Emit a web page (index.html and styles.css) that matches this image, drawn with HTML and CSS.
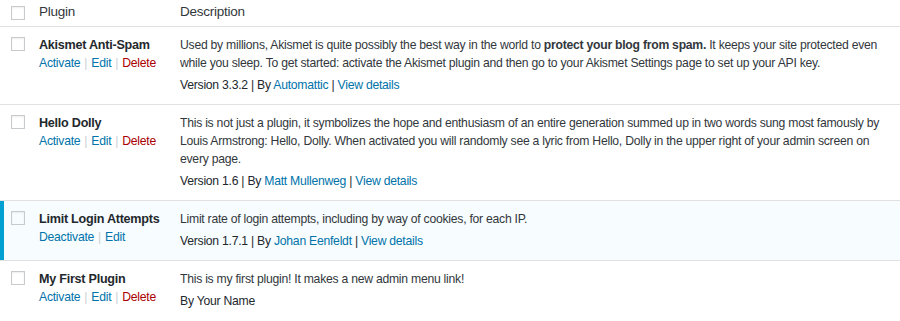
FILE: index.html
```html
<!DOCTYPE html>
<html lang="en">
<head>
    <meta charset="UTF-8">
    <title>Plugins</title>
    <link rel="stylesheet" href="styles.css">
</head>
<body>
    <table class="plugins">
        <thead>
            <tr>
                <td class="check"><span class="box"></span></td>
                <th class="col-name">Plugin</th>
                <th class="col-desc">Description</th>
            </tr>
        </thead>
        <tbody>
            <tr>
                <td class="check"><span class="box"></span></td>
                <td class="col-name">
                    <strong>Akismet Anti-Spam</strong>
                    <div class="actions"><a href="#">Activate</a><span class="sep">|</span><a href="#">Edit</a><span class="sep">|</span><a class="delete" href="#">Delete</a></div>
                </td>
                <td class="col-desc">
                    <p>Used by millions, Akismet is quite possibly the best way in the world to <strong>protect your blog from spam.</strong> It keeps your site protected even while you sleep. To get started: activate the Akismet plugin and then go to your Akismet Settings page to set up your API key.</p>
                    <div class="meta">Version 3.3.2 | By <a href="#">Automattic</a> | <a href="#">View details</a></div>
                </td>
            </tr>
            <tr>
                <td class="check"><span class="box"></span></td>
                <td class="col-name">
                    <strong>Hello Dolly</strong>
                    <div class="actions"><a href="#">Activate</a><span class="sep">|</span><a href="#">Edit</a><span class="sep">|</span><a class="delete" href="#">Delete</a></div>
                </td>
                <td class="col-desc">
                    <p>This is not just a plugin, it symbolizes the hope and enthusiasm of an entire generation summed up in two words sung most famously by Louis Armstrong: Hello, Dolly. When activated you will randomly see a lyric from Hello, Dolly in the upper right of your admin screen on every page.</p>
                    <div class="meta">Version 1.6 | By <a href="#">Matt Mullenweg</a> | <a href="#">View details</a></div>
                </td>
            </tr>
            <tr class="active">
                <td class="check"><span class="box"></span></td>
                <td class="col-name">
                    <strong>Limit Login Attempts</strong>
                    <div class="actions"><a href="#">Deactivate</a><span class="sep">|</span><a href="#">Edit</a></div>
                </td>
                <td class="col-desc">
                    <p>Limit rate of login attempts, including by way of cookies, for each IP.</p>
                    <div class="meta">Version 1.7.1 | By <a href="#">Johan Eenfeldt</a> | <a href="#">View details</a></div>
                </td>
            </tr>
            <tr>
                <td class="check"><span class="box"></span></td>
                <td class="col-name">
                    <strong>My First Plugin</strong>
                    <div class="actions"><a href="#">Activate</a><span class="sep">|</span><a href="#">Edit</a><span class="sep">|</span><a class="delete" href="#">Delete</a></div>
                </td>
                <td class="col-desc">
                    <p>This is my first plugin! It makes a new admin menu link!</p>
                    <div class="meta">By Your Name</div>
                </td>
            </tr>
        </tbody>
    </table>
</body>
</html>
```
FILE: styles.css
```css
body {
    margin: 0;
    background: #fff;
    font-family: "Liberation Sans", Arial, sans-serif;
    font-size: 12.2px;
    letter-spacing: -0.25px;
    line-height: 18px;
    color: #32373c;
}
.plugins {
    width: 100%;
    border-collapse: collapse;
}
.plugins td,
.plugins th {
    vertical-align: top;
    text-align: left;
}
.plugins thead th,
.plugins thead td {
    font-weight: normal;
    font-size: 13.5px;
    padding: 3px 0 5px 0;
    border-bottom: 1px solid #e1e1e1;
}
.plugins tbody tr {
    border-bottom: 1px solid #e1e1e1;
}
.plugins tbody tr:last-child {
    border-bottom: none;
}
.plugins tbody td {
    padding: 9px 0 10px 0;
}
.plugins .check {
    width: 28px;
    padding-left: 11px;
}
.box {
    display: block;
    width: 12px;
    height: 12px;
    border: 1px solid #c8cbce;
    margin-top: 1px;
    box-shadow: inset 0 1px 2px rgba(0,0,0,0.07);
}
.plugins thead .box {
    margin-top: 3px;
}
.plugins .col-name {
    width: 131px;
    padding-right: 10px;
}
.col-name strong {
    font-size: 12.6px;
    color: #23282d;
}
a {
    color: #0073aa;
    text-decoration: none;
}
a.delete {
    color: #a00;
}
.sep {
    color: #ccd0d4;
    margin: 0 4px;
}
.col-desc p {
    margin: 0 0 4px;
}
.meta {
    color: #23282d;
}
.active {
    background: #f7fcfe;
}
.active .check {
    box-shadow: inset 4px 0 0 #00a0d2;
}
```
